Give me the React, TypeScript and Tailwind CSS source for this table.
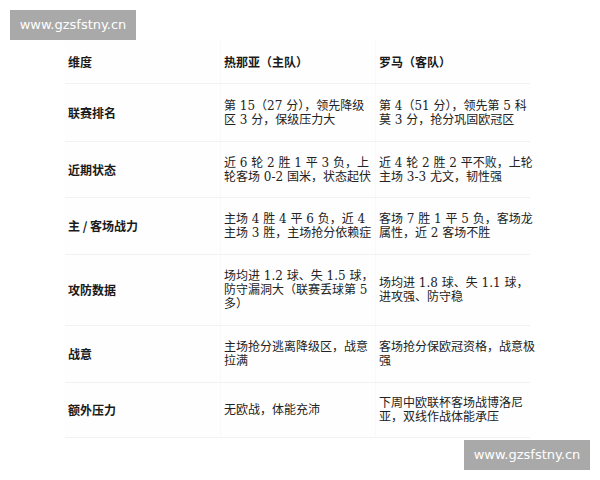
import React from "react";

type Row = { label: string; h: string; a: string[]; b: string[] };

const rows: Row[] = [
  {
    label: "联赛排名",
    h: "h-[58px]",
    a: ["第 15（27 分），领先降级", "区 3 分，保级压力大"],
    b: ["第 4（51 分），领先第 5 科", "莫 3 分，抢分巩固欧冠区"],
  },
  {
    label: "近期状态",
    h: "h-[56px]",
    a: ["近 6 轮 2 胜 1 平 3 负，上", "轮客场 0-2 国米，状态起伏"],
    b: ["近 4 轮 2 胜 2 平不败，上轮", "主场 3-3 尤文，韧性强"],
  },
  {
    label: "主 / 客场战力",
    h: "h-[57px]",
    a: ["主场 4 胜 4 平 6 负，近 4", "主场 3 胜，主场抢分依赖症"],
    b: ["客场 7 胜 1 平 5 负，客场龙", "属性，近 2 客场不胜"],
  },
  {
    label: "攻防数据",
    h: "h-[71px]",
    a: ["场均进 1.2 球、失 1.5 球，", "防守漏洞大（联赛丢球第 5", "多）"],
    b: ["场均进 1.8 球、失 1.1 球，", "进攻强、防守稳"],
  },
  {
    label: "战意",
    h: "h-[57px]",
    a: ["主场抢分逃离降级区，战意", "拉满"],
    b: ["客场抢分保欧冠资格，战意极", "强"],
  },
  {
    label: "额外压力",
    h: "h-[55px]",
    a: ["无欧战，体能充沛"],
    b: ["下周中欧联杯客场战博洛尼", "亚，双线作战体能承压"],
  },
];

const bodyFont = {
  fontFamily: '"DejaVu Serif", "Noto Sans CJK SC", serif',
};

function Lines({ lines }: { lines: string[] }) {
  return (
    <div className="flex flex-col text-[12px] leading-[14px] text-[#222]" style={bodyFont}>
      {lines.map((l, i) => (
        <span key={i} className="whitespace-nowrap">
          {l}
        </span>
      ))}
    </div>
  );
}

function Watermark() {
  return (
    <div className="w-[126px] h-[30px] bg-[#a9a9a9] flex items-center justify-center">
      <span className="text-white text-[13px] font-['DejaVu_Sans',sans-serif]">
        www.gzsfstny.cn
      </span>
    </div>
  );
}

export default function App() {
  return (
    <div className="w-[600px] h-[480px] bg-white overflow-hidden pt-[10px] font-['Noto_Sans_CJK_SC',sans-serif]">
      <div className="pl-[10px]">
        <Watermark />
      </div>
      <div className="ml-[65px] w-[465px] bg-[#fefefe]">
        <div className="grid grid-cols-[155px_155px_155px] h-[44px] border-b border-[#f2f2f2]">
          <div className="flex items-center pl-[3px] text-[12px] font-bold text-[#1a1a1a]">维度</div>
          <div className="flex items-center pl-[3px] text-[12px] font-bold text-[#1a1a1a] border-l border-[#f9f9f9]">
            热那亚（主队）
          </div>
          <div className="flex items-center pl-[3px] text-[12px] font-bold text-[#1a1a1a] border-l border-[#f9f9f9]">
            罗马（客队）
          </div>
        </div>
        {rows.map((r, i) => (
          <div
            key={i}
            className={`grid grid-cols-[155px_155px_155px] ${r.h} border-b border-[#f2f2f2]`}
          >
            <div className="flex items-center pl-[3px] text-[12px] font-bold text-[#1a1a1a] whitespace-nowrap">
              {r.label}
            </div>
            <div className="flex items-center pl-[3px] border-l border-[#f9f9f9]">
              <Lines lines={r.a} />
            </div>
            <div className="flex items-center pl-[3px] border-l border-[#f9f9f9]">
              <Lines lines={r.b} />
            </div>
          </div>
        ))}
      </div>
      <div className="pl-[464px] pt-[2px]">
        <Watermark />
      </div>
    </div>
  );
}
